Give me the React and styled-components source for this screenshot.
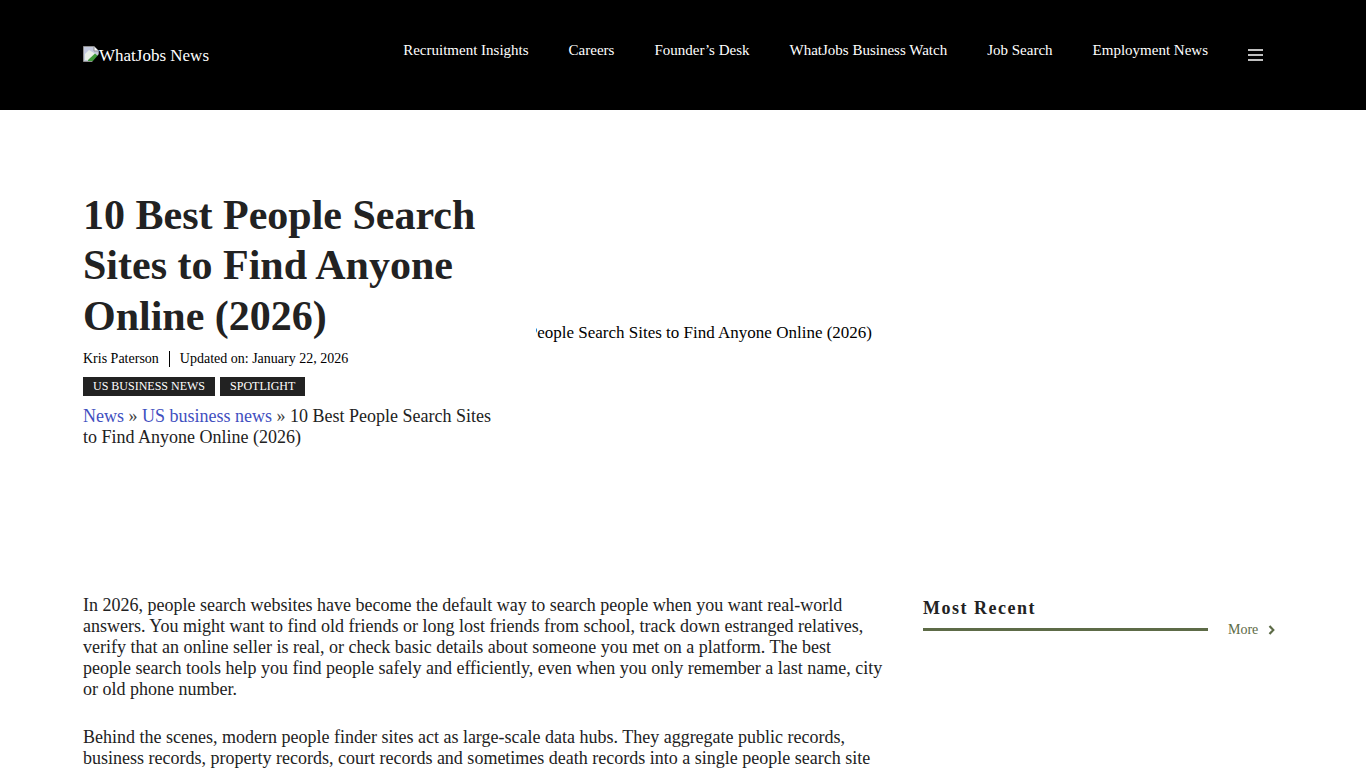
import styled, { createGlobalStyle } from "styled-components";

const GlobalStyle = createGlobalStyle`
  html, body {
    margin: 0;
    padding: 0;
    overflow: hidden;
    height: 768px;
    background: #fff;
    font-family: "Liberation Serif", "Times New Roman", serif;
    color: #222;
  }
`;

const navItems = [
  "Recruitment Insights",
  "Careers",
  "Founder’s Desk",
  "WhatJobs Business Watch",
  "Job Search",
  "Employment News",
];

const BrokenImage = () => (
  <svg width="16" height="16" viewBox="0 0 16 16">
    <path d="M0.5 0.5H11L15.5 5V15.5H0.5Z" fill="#c3c9dd" stroke="#8f8f8f" />
    <path d="M11 0.5V5H15.5" fill="#fff" stroke="#8f8f8f" />
    <path d="M2 8L6 4L11 7L14 9V14H2Z" fill="#e9efe7" />
    <path d="M5 14L12 7.5L15 10V15H5Z" fill="#3f9a3a" />
    <path d="M9 16L16 8V16Z" fill="#000" />
  </svg>
);

const MenuIcon = () => (
  <svg width="15" height="12" viewBox="0 0 15 12">
    <path d="M0 1H15M0 6H15M0 11H15" stroke="#fff" strokeWidth="1.5" />
  </svg>
);

const MoreArrow = () => (
  <svg width="7" height="10" viewBox="0 0 7 10">
    <path d="M1.5 1L5.3 5L1.5 9" fill="none" stroke="#5d6b47" strokeWidth="2.2" />
  </svg>
);

export default function App() {
  return (
    <>
      <GlobalStyle />
      <Header>
        <Logo>
          <BrokenImage />
          <span>WhatJobs News</span>
        </Logo>
        <Nav>
          {navItems.map((item) => (
            <NavLink key={item}>{item}</NavLink>
          ))}
          <MenuButton>
            <MenuIcon />
          </MenuButton>
        </Nav>
      </Header>

      <Hero>
        <HeroText>
          <Title>10 Best People Search Sites to Find Anyone Online (2026)</Title>
          <Meta>
            <Author>Kris Paterson</Author>
            <span>Updated on: January 22, 2026</span>
          </Meta>
          <Tags>
            <Tag>US BUSINESS NEWS</Tag>
            <Tag>SPOTLIGHT</Tag>
          </Tags>
          <Breadcrumb>
            <a>News</a> » <a>US business news</a> » <b>10 Best People Search Sites to Find Anyone Online (2026)</b>
          </Breadcrumb>
        </HeroText>
        <HeroImage>
          <span>10 Best People Search Sites to Find Anyone Online (2026)</span>
        </HeroImage>
      </Hero>

      <Content>
        <Article>
          <p>
            In 2026, people search websites have become the default way to search people when you want real-world
            answers. You might want to find old friends or long lost friends from school, track down estranged relatives,
            verify that an online seller is real, or check basic details about someone you met on a platform. The best
            people search tools help you find people safely and efficiently, even when you only remember a last name, city
            or old phone number.
          </p>
          <p>
            Behind the scenes, modern people finder sites act as large-scale data hubs. They aggregate public records,
            business records, property records, court records and sometimes death records into a single people search site
          </p>
        </Article>
        <Sidebar>
          <SideTitle>Most Recent</SideTitle>
          <SideRow>
            <SideRule />
            <More>
              More
              <MoreArrow />
            </More>
          </SideRow>
        </Sidebar>
      </Content>
    </>
  );
}

const Header = styled.header`
  height: 110px;
  background: #000;
  color: #fff;
  display: flex;
  justify-content: space-between;
  padding: 0 103px 0 83px;
`;

const Logo = styled.div`
  display: flex;
  align-items: center;
  height: 110px;
  font-size: 17px;
  svg {
    flex: none;
    margin-bottom: 2px;
  }
  span {
    padding-top: 2px;
  }
`;

const Nav = styled.nav`
  display: flex;
  align-items: flex-start;
  gap: 40px;
  padding-top: 41px;
`;

const NavLink = styled.a`
  font-size: 15px;
  line-height: 18px;
  color: #fff;
`;

const MenuButton = styled.div`
  display: flex;
  padding-top: 8px;
`;

const Hero = styled.section`
  display: flex;
  padding: 80px 83px 0;
  height: 485px;
  box-sizing: border-box;
  gap: 45px;
`;

const HeroText = styled.div`
  width: 408px;
  flex: none;
`;

const Title = styled.h1`
  margin: 0;
  font-size: 42px;
  line-height: 50.4px;
  font-weight: 700;
  color: #222;
`;

const Meta = styled.div`
  display: flex;
  align-items: center;
  margin-top: 10px;
  font-size: 14px;
  line-height: 16px;
  color: #000;
`;

const Author = styled.span`
  padding-right: 10px;
  margin-right: 10px;
  border-right: 1px solid #000;
`;

const Tags = styled.div`
  display: flex;
  gap: 5px;
  margin-top: 10px;
`;

const Tag = styled.span`
  background: #222;
  color: #fff;
  font-size: 12px;
  line-height: 19px;
  padding: 0 10px;
`;

const Breadcrumb = styled.div`
  margin-top: 10px;
  font-size: 18px;
  line-height: 21px;
  color: #444;
  a {
    color: #3f4fc0;
  }
  b {
    font-weight: 400;
    color: #222;
  }
`;

const HeroImage = styled.div`
  width: 336px;
  height: 280px;
  margin-top: 3px;
  display: flex;
  align-items: center;
  justify-content: flex-end;
  overflow: hidden;
  font-size: 17px;
  color: #000;
  white-space: nowrap;
  span {
    flex: none;
  }
`;

const Content = styled.main`
  display: flex;
  padding: 0 83px;
  gap: 40px;
`;

const Article = styled.article`
  width: 800px;
  flex: none;
  font-size: 18px;
  line-height: 21px;
  color: #222;
  p {
    margin: 0 0 27px;
  }
`;

const Sidebar = styled.aside`
  width: 360px;
  flex: none;
  padding-top: 3px;
`;

const SideTitle = styled.h3`
  margin: 0;
  font-size: 18px;
  line-height: 21px;
  letter-spacing: 1.5px;
  font-weight: 700;
  color: #222;
`;

const SideRow = styled.div`
  display: flex;
  align-items: center;
  gap: 20px;
  margin-top: 2px;
`;

const SideRule = styled.div`
  width: 285px;
  height: 3px;
  flex: none;
  background: #5d6b47;
`;

const More = styled.a`
  display: flex;
  align-items: center;
  gap: 10px;
  margin: 1px 0 -1px;
  font-size: 14px;
  line-height: 16px;
  color: #5d6b47;
`;
